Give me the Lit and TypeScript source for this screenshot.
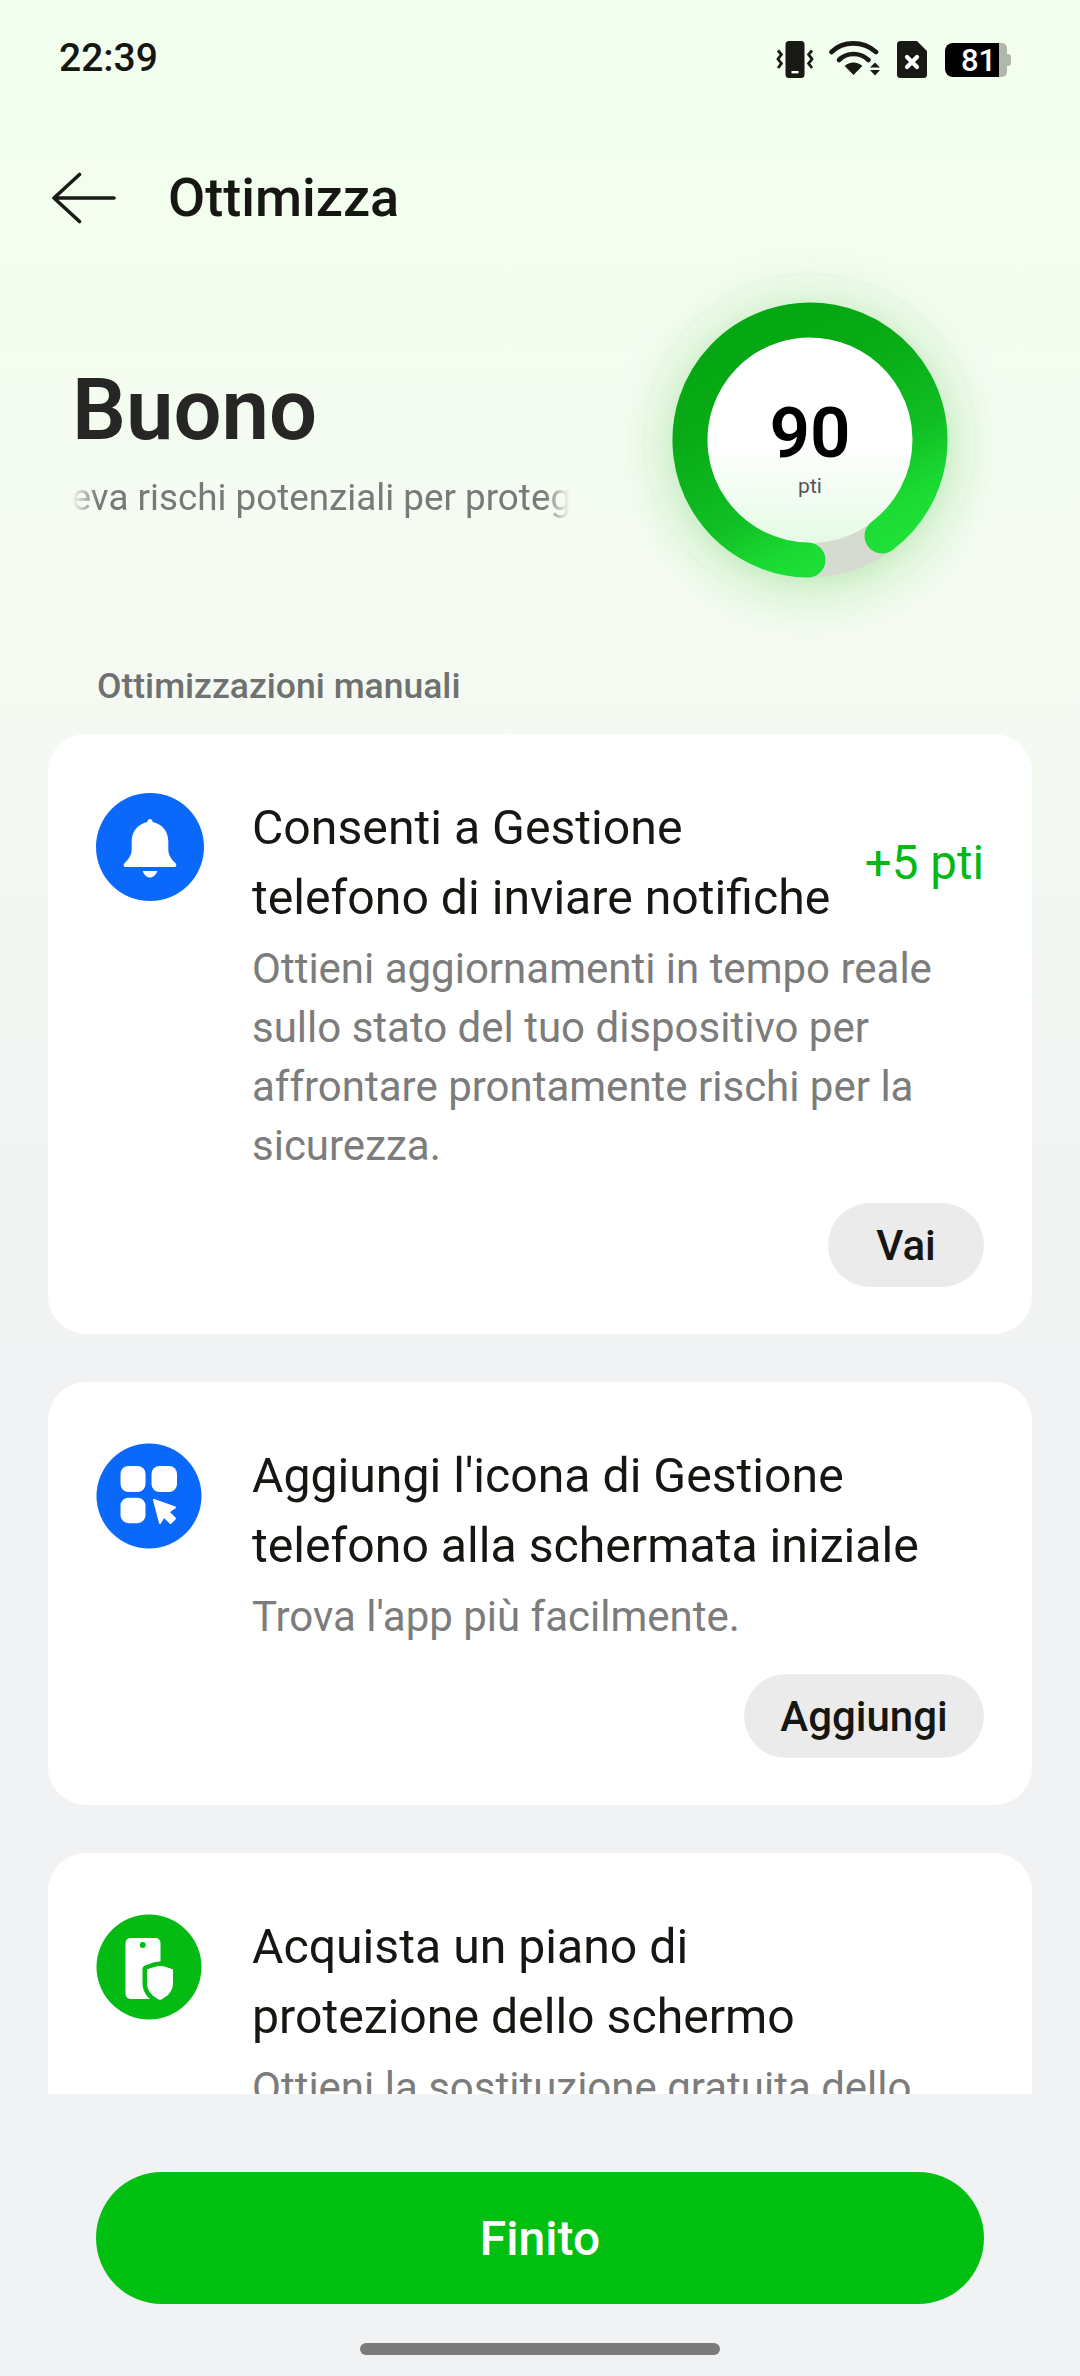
import { LitElement, html, css, svg } from "lit";
import { customElement } from "lit/decorators.js";

@customElement("app-root")
export class AppRoot extends LitElement {
  static styles = css`
    :host { display: block; width: 1080px; height: 2376px; overflow: hidden; font-family: Roboto, "Noto Sans", sans-serif; color: #161613; }
    .page { width: 1080px; height: 2376px; display: flex; flex-direction: column; background: linear-gradient(180deg, #f3ffee 0, #f3ffee 160px, #f5fbf2 560px, #f0f2f3 1350px, #f0f2f4 100%); }
    .status { height: 156px; flex: none; box-sizing: border-box; padding: 40px 69px 0 59px; display: flex; justify-content: space-between; align-items: flex-start; }
    .time { font-size: 39px; line-height: 36px; font-weight: 500; }
    .sicons { display: flex; align-items: flex-start; margin-top: 1px; }
    .sicons svg { display: block; }
    .battery { display: flex; height: 34px; margin-top: 2px; margin-left: 18px; }
    .batt-fill { width: 54px; background: #000; color: #fff; border-radius: 8px 0 0 8px; font-size: 31px; line-height: 35px; font-weight: 500; box-sizing: border-box; padding-left: 16px; }
    .batt-rest { width: 8px; background: #b0b8ac; border-radius: 0 5px 5px 0; }
    .batt-nub { width: 4px; height: 12px; margin-top: 11px; background: #b0b8ac; border-radius: 0 3px 3px 0; }
    .header { height: 84px; flex: none; display: flex; align-items: center; padding-left: 52px; }
    .header svg { display: block; }
    .header h1 { margin: 0 0 0 52px; font-size: 54px; font-weight: 500; line-height: 84px; }
    .hero { height: 400px; flex: none; display: flex; }
    .hero-text { width: 590px; box-sizing: border-box; padding: 125px 20px 0 72px; }
    .buono { font-size: 85px; line-height: 90px; font-weight: 600; color: #262624; }
    .sub { margin-top: 21px; height: 44px; overflow: hidden; white-space: nowrap; font-size: 36.800px; line-height: 44px; color: #777a77;
      -webkit-mask-image: linear-gradient(90deg, transparent 0, #000 26px, #000 calc(100% - 26px), transparent 100%);
      mask-image: linear-gradient(90deg, transparent 0, #000 26px, #000 calc(100% - 26px), transparent 100%); }
    .sub span { display: inline-block; margin-left: -41px; }
    .score { position: relative; width: 440px; height: 400px; }
    .score svg { display: block; }
    .score-num { position: absolute; left: 0; right: 0; top: 158px; text-align: center; font-size: 71px; line-height: 70px; font-weight: 600; color: #000; }
    .score-unit { position: absolute; left: 0; right: 0; top: 233px; text-align: center; font-size: 21px; line-height: 26px; color: #555; }
    .label { flex: none; height: 94px; box-sizing: border-box; padding: 23px 0 0 97px; font-size: 35.500px; line-height: 46px; font-weight: 500; color: #6f706f; }
    .scroll { flex: none; height: 1360px; overflow: hidden; padding: 0 48px; display: flex; flex-direction: column; gap: 48px; }
    .card { flex: none; background: #fff; border-radius: 38px; padding: 59px 48px 47px; display: grid; grid-template-columns: 108px 1fr; column-gap: 48px; }
    .icon { display: block; }
    .icon.low { margin-top: 2px; }
    .body { min-width: 0; }
    .title-row { display: flex; justify-content: space-between; align-items: center; }
    .title { font-size: 48.200px; line-height: 70px; color: #161613; white-space: nowrap; }
    .pts { font-size: 47.500px; color: #04b815; white-space: nowrap; }
    .desc { margin-top: 6px; font-size: 42px; line-height: 59px; color: #7b7c7b; white-space: nowrap; }
    .actions { display: flex; justify-content: flex-end; margin-top: 28px; }
    .btn { height: 84px; border-radius: 42px; background: #ebebeb; display: flex; align-items: center; justify-content: center; font-size: 42px; font-weight: 500; color: #161613; }
    .btn.vai { width: 156px; }
    .btn.add { width: 240px; }
    .foot { flex: 1; display: flex; flex-direction: column; align-items: center; padding-top: 78px; }
    .done { width: 888px; height: 132px; border-radius: 66px; background: #02c012; color: #fff; font-size: 48px; font-weight: 500; display: flex; align-items: center; justify-content: center; }
    .home { width: 360px; height: 12px; margin-top: 39px; border-radius: 6px; background: #7b7b7b; }
  `;

  private statusIcons() {
    return html`<div class="sicons">
      <svg width="40" height="37" viewBox="0 0 40 37" style="margin-right:13px">
        <rect x="9.500" y="0" width="19" height="37" rx="3.500" fill="#181815"/>
        <rect x="15.500" y="30" width="7" height="2.400" fill="#fff"/>
        <path d="M2 9.500l3.400 4L2 18l3.400 4.500L2 27" fill="none" stroke="#181815" stroke-width="2.800"/>
        <path d="M36 9.500l-3.400 4L36 18l-3.400 4.500L36 27" fill="none" stroke="#181815" stroke-width="2.800"/>
      </svg>
      <svg width="52" height="36" viewBox="0 0 52 36" style="margin-right:16px">
        <path d="M2.500 11C14 -.5 34 -.5 47 11" fill="none" stroke="#181815" stroke-width="4.600" stroke-linecap="round"/>
        <path d="M10 19C18 11 31 11 39.500 19" fill="none" stroke="#181815" stroke-width="4.600" stroke-linecap="round"/>
        <path d="M24.500 21.500c3.400 0 6.500 1.300 8.800 3.400L24.500 34 15.700 24.900c2.300-2.100 5.400-3.400 8.800-3.400z" fill="#181815"/>
        <path d="M46 21.500l5 5H41z M41 29h10l-5 5.500z" fill="#181815"/>
      </svg>
      <svg width="30" height="37" viewBox="0 0 30 37">
        <path d="M3.500 0H20l10 10v23.500a3.500 3.500 0 0 1-3.500 3.500H3.500A3.500 3.500 0 0 1 0 33.500V3.500A3.500 3.500 0 0 1 3.500 0z" fill="#181815"/>
        <path d="M10 16l10 10M20 16L10 26" stroke="#fff" stroke-width="4.200" stroke-linecap="round"/>
      </svg>
      <div class="battery"><div class="batt-fill">81</div><div class="batt-rest"></div><div class="batt-nub"></div></div>
    </div>`;
  }

  private scoreRing() {
    return svg`<svg width="440" height="400" viewBox="0 0 440 400">
      <defs>
        <radialGradient id="glow" gradientUnits="userSpaceOnUse" cx="220" cy="206" r="200">
          <stop offset="0.66" stop-color="#cdeec8"/>
          <stop offset="0.76" stop-color="#e2f6de"/>
          <stop offset="0.88" stop-color="#eefaeb"/>
          <stop offset="1" stop-color="#f3fcf0" stop-opacity="0"/>
        </radialGradient>
        <linearGradient id="arc" gradientUnits="userSpaceOnUse" x1="150" y1="80" x2="270" y2="320">
          <stop offset="0.1" stop-color="#05a813"/>
          <stop offset="0.31" stop-color="#08ab16"/>
          <stop offset="0.66" stop-color="#10bf24"/>
          <stop offset="0.88" stop-color="#1cdc34"/>
          <stop offset="1" stop-color="#1ee038"/>
        </linearGradient>
        <linearGradient id="disc" x1="0" y1="0" x2="0" y2="1">
          <stop offset="0.5" stop-color="#ffffff"/>
          <stop offset="1" stop-color="#e6fae6"/>
        </linearGradient>
      </defs>
      <circle cx="220" cy="206" r="200" fill="url(#glow)"/>
      <circle cx="220" cy="200" r="166" fill="none" stroke="#dcf3d9" stroke-width="1.500" opacity=".4"/>
      <circle cx="220" cy="200" r="120" fill="none" stroke="#d6dbd1" stroke-width="35"/>
      <circle cx="220" cy="200" r="103" fill="url(#disc)"/>
      <path d="M218 320A120 120 0 1 1 292 296" fill="none" stroke="url(#arc)" stroke-width="35" stroke-linecap="round"/>
    </svg>`;
  }

  private bell() {
    return html`<svg class="icon" width="108" height="108" viewBox="0 0 108 108">
      <circle cx="54" cy="54" r="54" fill="#0a68fb"/>
      <path d="M54 26c1.500 0 2.500 1.200 2.700 3C66 31 72 38 72.300 48v8c0 6 3 10 7 14 1.500 1.500 1.500 4-1 4H29.700c-2.500 0-2.500-2.500-1-4 4-4 7-8 7-14v-8C36 38 42 31 51.300 29c.2-1.800 1.200-3 2.700-3z" fill="#fff"/>
      <path d="M46.700 78H61.300C60 82 57 84.500 54 84.500S48 82 46.700 78z" fill="#fff"/>
    </svg>`;
  }

  private apps() {
    return html`<svg class="icon low" width="108" height="108" viewBox="0 0 108 108">
      <circle cx="53" cy="53" r="52.500" fill="#0a68fb"/>
      <rect x="24.500" y="23" width="25" height="26" rx="8" fill="#fff"/>
      <rect x="55.500" y="23" width="25.500" height="26" rx="8" fill="#fff"/>
      <rect x="24.500" y="54.700" width="25" height="25.500" rx="8" fill="#fff"/>
      <path d="M58 57L79 64.500 72.500 69 79 75.500 74.500 80 68 73.500 64 80z" fill="#fff" stroke="#fff" stroke-width="2" stroke-linejoin="round"/>
    </svg>`;
  }

  private shield() {
    return html`<svg class="icon low" width="108" height="108" viewBox="0 0 108 108">
      <circle cx="53" cy="53" r="52.500" fill="#04bb14"/>
      <rect x="29.500" y="24" width="35" height="61" rx="5" fill="#fff"/>
      <circle cx="46.700" cy="31" r="3" fill="#04bb14"/>
      <path d="M64 52c4 0 9 2 13 3.500v14C77 78 70 83.500 64 86c-6-2.500-13-8-13-16.500v-14C55 54 60 52 64 52z" fill="#fff" stroke="#04bb14" stroke-width="9" paint-order="stroke" stroke-linejoin="round"/>
    </svg>`;
  }

  render() {
    return html`<div class="page">
      <div class="status"><div class="time">22:39</div>${this.statusIcons()}</div>
      <div class="header">
        <svg width="64" height="52" viewBox="0 0 64 52">
          <path d="M2 26H62M27.500 2.500L2 26L27.500 49.500" fill="none" stroke="#1a1a17" stroke-width="3.600" stroke-linecap="round" stroke-linejoin="round"/>
        </svg>
        <h1>Ottimizza</h1>
      </div>
      <div class="hero">
        <div class="hero-text">
          <div class="buono">Buono</div>
          <div class="sub"><span>Rileva rischi potenziali per proteggere il dispositivo</span></div>
        </div>
        <div class="score">
          ${this.scoreRing()}
          <div class="score-num">90</div>
          <div class="score-unit">pti</div>
        </div>
      </div>
      <div class="label">Ottimizzazioni manuali</div>
      <div class="scroll">
        <div class="card">
          ${this.bell()}
          <div class="body">
            <div class="title-row">
              <div class="title">Consenti a Gestione<br />telefono di inviare notifiche</div>
              <div class="pts">+5 pti</div>
            </div>
            <div class="desc">Ottieni aggiornamenti in tempo reale<br />sullo stato del tuo dispositivo per<br />affrontare prontamente rischi per la<br />sicurezza.</div>
            <div class="actions"><div class="btn vai">Vai</div></div>
          </div>
        </div>
        <div class="card">
          ${this.apps()}
          <div class="body">
            <div class="title">Aggiungi l'icona di Gestione<br />telefono alla schermata iniziale</div>
            <div class="desc">Trova l'app più facilmente.</div>
            <div class="actions"><div class="btn add">Aggiungi</div></div>
          </div>
        </div>
        <div class="card">
          ${this.shield()}
          <div class="body">
            <div class="title">Acquista un piano di<br />protezione dello schermo</div>
            <div class="desc">Ottieni la sostituzione gratuita dello</div>
          </div>
        </div>
      </div>
      <div class="foot">
        <div class="done">Finito</div>
        <div class="home"></div>
      </div>
    </div>`;
  }
}
